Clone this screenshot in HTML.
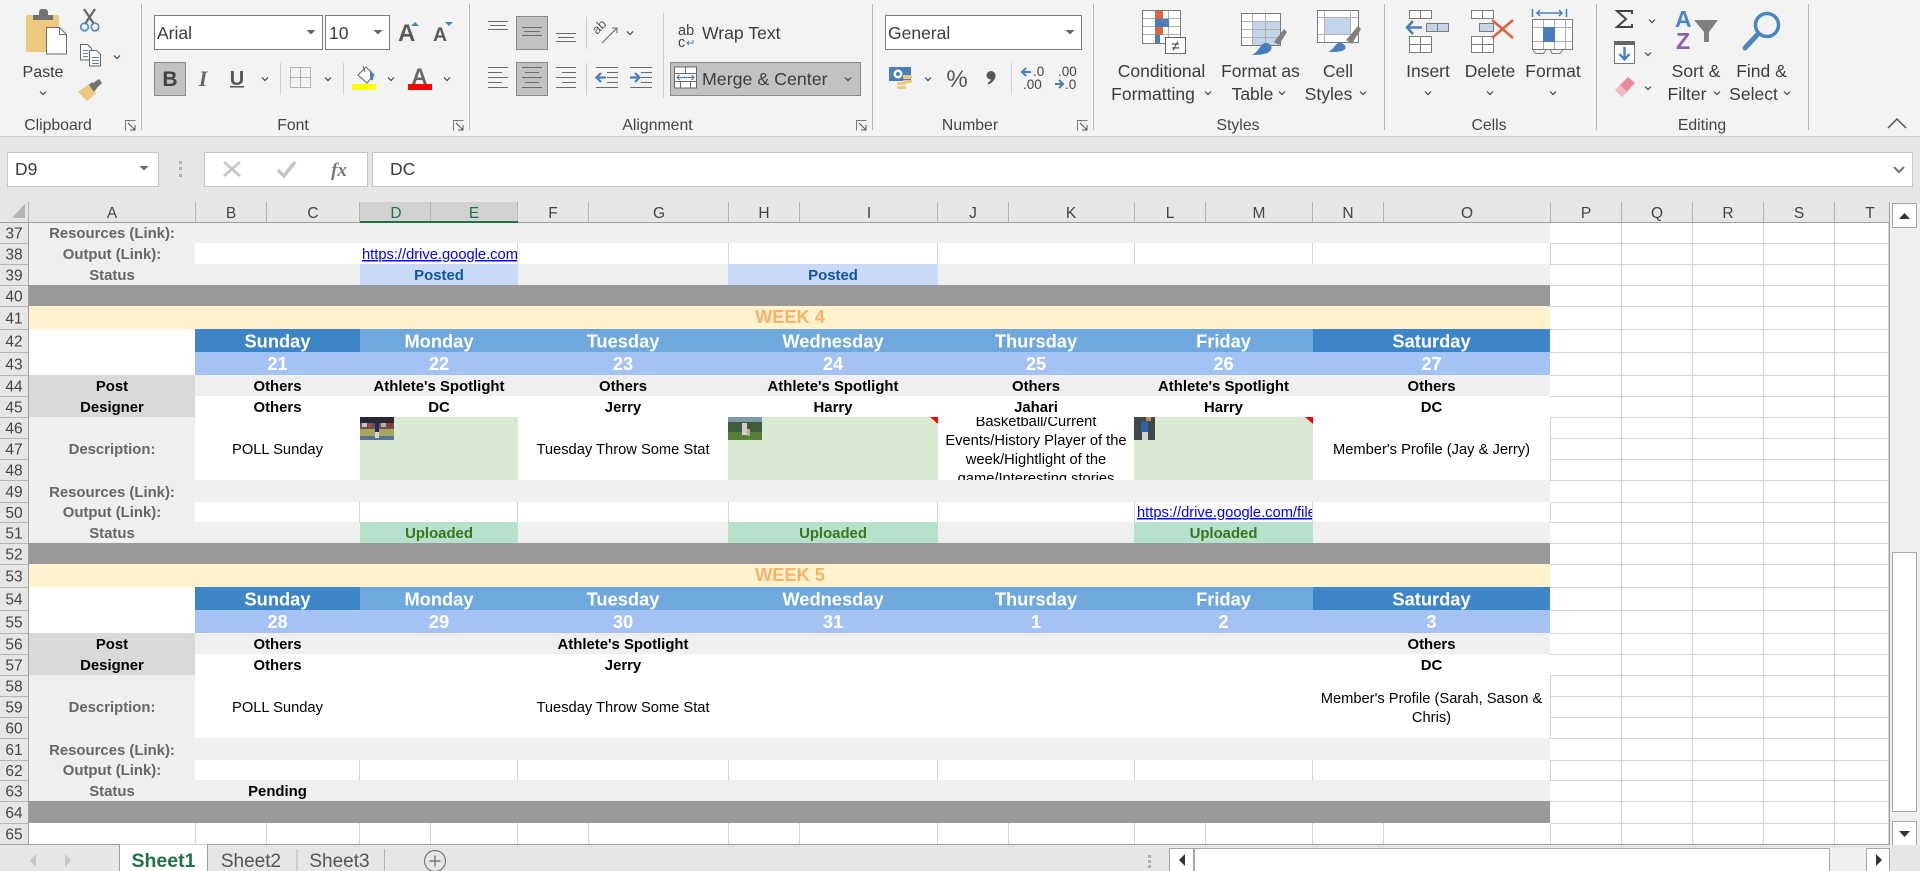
<!DOCTYPE html>
<html lang="en">
<head>
<meta charset="utf-8">
<title>Sheet1 - Excel</title>
<style>
html,body{margin:0;padding:0;width:1920px;height:871px;overflow:hidden;background:#f3f3f3}
svg{display:block;font-family:"Liberation Sans",Arial,sans-serif}
.rn text{font-size:15.5px;fill:#444;text-anchor:middle}
.ch text{font-size:15.5px;fill:#444;text-anchor:middle}
.lab text{font-size:14.9px;font-weight:bold;fill:#666;text-anchor:middle}
.bd text{font-size:14.9px;font-weight:bold;fill:#000;text-anchor:middle}
.nm text{font-size:14.7px;fill:#000;text-anchor:middle}
.day text{font-size:18.3px;font-weight:bold;fill:#fff;text-anchor:middle}
.wk text{font-size:18.2px;font-weight:bold;fill:#f6b26b;text-anchor:middle}
.up text{font-size:14.9px;font-weight:bold;fill:#38761d;text-anchor:middle}
.po text{font-size:14.9px;font-weight:bold;fill:#1155a0;text-anchor:middle}
.lk{font-size:14.7px;fill:#0000ff;text-decoration:underline}
.rb text{font-size:17.5px;fill:#3c3c3c}
.rbm text{font-size:17.5px;fill:#3c3c3c;text-anchor:middle}
.grp text{font-size:15.8px;fill:#444;text-anchor:middle}
.ln{fill:none;stroke:#6a6a6a;stroke-width:1}
.tb{fill:#fff;stroke:#7b7b7b;stroke-width:1}
.cv{fill:none;stroke:#444;stroke-width:1.2}
</style>
</head>
<body>
<svg width="1920" height="871" viewBox="0 0 1920 871" xmlns="http://www.w3.org/2000/svg">
<defs>
<path id="c" class="cv" d="M-3-1.5L0 1.5L3-1.5"/>
<path id="t" fill="#666" d="M-4.5-2H4.5L0 2.5Z"/>
<g id="dl"><path fill="none" stroke="#777" stroke-width="1" d="M10.500 .5H.5V10.500"/><path fill="none" stroke="#555" stroke-width="1" d="M3 3L10 10M10 5V10H5"/></g>
<clipPath id="k1"><rect x="360" y="243" width="157" height="21"/></clipPath>
<clipPath id="k2"><rect x="1135" y="502" width="177" height="20"/></clipPath>
<clipPath id="k3"><rect x="938" y="417" width="196" height="63"/></clipPath>
</defs>

<!-- ribbon -->
<rect width="1920" height="136" fill="#f3f3f3"/>
<rect y="136" width="1920" height="66" fill="#e6e6e6"/>
<rect y="136" width="1920" height="1" fill="#cfcfcf"/>
<g fill="#b6b6b6" shape-rendering="crispEdges">
<rect x="141" y="4" width="1" height="126"/><rect x="469" y="4" width="1" height="126"/><rect x="872" y="4" width="1" height="126"/><rect x="1093" y="4" width="1" height="126"/><rect x="1384" y="4" width="1" height="126"/><rect x="1596" y="4" width="1" height="126"/><rect x="1808" y="4" width="1" height="126"/>
</g>
<g fill="#d0d0d0" shape-rendering="crispEdges">
<rect x="280" y="63" width="1" height="32"/><rect x="343" y="63" width="1" height="32"/><rect x="586" y="17" width="1" height="32"/><rect x="586" y="63" width="1" height="32"/><rect x="663" y="13" width="1" height="85"/><rect x="1011" y="63" width="1" height="32"/>
</g>

<!-- clipboard -->
<rect x="26" y="15" width="33" height="37" rx="2" fill="#edc87e"/>
<path fill="#737373" d="M33 15h6v-3a3 3 0 0 1 3-3h3a3 3 0 0 1 3 3v3h5v5H33z"/>
<path fill="#fff" stroke="#6d6d6d" d="M46.500 27.500h13l7 7v19.500h-20z"/><path fill="none" stroke="#6d6d6d" d="M59.500 27.500v7h7"/>
<path fill="none" stroke="#666" stroke-width="2.200" d="M85 24L95 9M94 24L84 9"/>
<circle cx="84.500" cy="27" r="3.800" fill="none" stroke="#4a86c0" stroke-width="1.600"/><circle cx="95" cy="27" r="3.800" fill="none" stroke="#4a86c0" stroke-width="1.600"/>
<path fill="#fff" stroke="#666" d="M80.500 44.500h7l4 4v11.500h-11z"/><path fill="#fff" stroke="#666" d="M89.500 50.500h7l4 4v11.500h-11z"/>
<path stroke="#4a86c0" fill="none" d="M83 50.500h5M83 53.500h5M83 56.500h5M92 57.500h7M92 60.500h7M92 63.500h7"/>
<path fill="#edc87e" d="M78 92L89 84L96 93L87 101Z"/><path fill="#737373" d="M89 85L92 82L97 88L94 92ZM93 83L99 79L102 83L97 88Z"/>
<g class="rbm"><text x="43" y="77" style="font-size:16px">Paste</text></g>
<use href="#c" x="43" y="93"/><use href="#c" x="117" y="57"/>
<g class="grp"><text x="58" y="130">Clipboard</text><text x="293" y="130">Font</text><text x="657.500" y="130">Alignment</text><text x="970" y="130">Number</text><text x="1238" y="130">Styles</text><text x="1489" y="130">Cells</text><text x="1702" y="130">Editing</text></g>
<use href="#dl" x="125" y="120"/><use href="#dl" x="453" y="120"/><use href="#dl" x="856" y="120"/><use href="#dl" x="1077" y="120"/>

<!-- font -->
<rect x="154.500" y="15.500" width="168" height="34" class="tb" stroke="#8e8e8e"/>
<rect x="325.500" y="15.500" width="64" height="34" class="tb"/>
<g class="rb"><text x="157" y="39">Arial</text><text x="329" y="39">10</text></g>
<use href="#t" x="311" y="32"/><use href="#t" x="378" y="32"/>
<text x="398" y="41" font-size="24" font-weight="bold" fill="#5a5a5a">A</text><path d="M411 26l4-4 4 4z" fill="#4a7ebb"/>
<text x="433" y="41" font-size="19.500" font-weight="bold" fill="#5a5a5a">A</text><path d="M445 22h8l-4 4z" fill="#4a7ebb"/>
<rect x="154.500" y="62.500" width="31" height="33" fill="#c2c2c2" stroke="#8a8a8a"/>
<text x="170" y="86" font-size="21" font-weight="bold" fill="#444" text-anchor="middle">B</text>
<text x="203" y="86" font-size="22" font-family="Liberation Serif" font-style="italic" font-weight="bold" fill="#666" text-anchor="middle">I</text>
<text x="237" y="85" font-size="20" fill="#555" text-anchor="middle" font-weight="bold">U</text><rect x="230" y="86" width="14" height="1.500" fill="#555"/>
<use href="#c" x="265" y="79"/>
<g fill="none" stroke="#777" stroke-dasharray="1 1"><rect x="290.500" y="67.500" width="20" height="20"/><path d="M300.500 67.500v20M290.500 77.500h20"/></g>
<use href="#c" x="328" y="79"/>
<path d="M358 75l8-8 8 8-7 8z" fill="#fff" stroke="#666"/><path d="M363 66l2 6" stroke="#666" fill="none"/><path d="M370 70c3 2 4 5 3 10-2 1-3-1-3-3z" fill="#4a7ebb"/>
<rect x="352" y="84" width="24" height="6" fill="#ff0"/><use href="#c" x="391" y="79"/>
<text x="419.500" y="84" font-size="22" font-weight="bold" fill="#666" text-anchor="middle">A</text>
<rect x="408" y="84" width="24" height="6" fill="#f00"/><use href="#c" x="447" y="79"/>

<!-- alignment -->
<rect x="516.500" y="16.500" width="31" height="33" fill="#c2c2c2" stroke="#8a8a8a"/>
<rect x="516.500" y="62.500" width="31" height="33" fill="#c2c2c2" stroke="#8a8a8a"/>
<path class="ln" d="M488 21.500h20M490 25.500h16M488 29.500h20M522 27.500h20M524 31.500h16M522 35.500h20M556 33.500h20M558 37.500h16M556 41.500h20"/>
<path class="ln" d="M488 67.500h20M488 72.500h14M488 77.500h20M488 82.500h14M488 87.500h20M522 67.500h20M525 72.500h14M522 77.500h20M525 82.500h14M522 87.500h20M556 67.500h20M562 72.500h14M556 77.500h20M562 82.500h14M556 87.500h20"/>
<text transform="translate(597 35) rotate(-45)" font-size="13" fill="#555">ab</text><path fill="none" stroke="#666" d="M602 43L617 28M612 28h5v5"/>
<use href="#c" x="630" y="33"/>
<path class="ln" d="M596 67.500h22M607 72.500h11M607 77.500h11M607 82.500h11M596 87.500h22M630 67.500h22M641 72.500h11M641 77.500h11M641 82.500h11M630 87.500h22"/>
<path fill="none" stroke="#4a7ebb" stroke-width="2.200" d="M606 77.500h-9M601 73l-4.500 4.500L601 82M630 77.500h9M635 73l4.500 4.500L635 82"/>
<g fill="#444"><text x="678" y="35" font-size="14.500">ab</text><text x="678" y="47" font-size="14.500">c</text></g>
<path fill="none" stroke="#4a7ebb" d="M693 40v3h-6M689 41l-2 2 2 2"/>
<g class="rb"><text x="702" y="39" style="font-size:17.6px">Wrap Text</text></g>
<rect x="670.500" y="62.500" width="190" height="33" fill="#c2c2c2" stroke="#8a8a8a"/>
<rect x="674.500" y="67" width="22" height="21" fill="#fff" stroke="#666"/><path class="ln" d="M674 73.500h23M674 81.500h23M685.500 67v6M680.500 81v7M690.500 81v7"/>
<path fill="none" stroke="#4a7ebb" stroke-width="1.200" d="M677 77.500h17M679.500 75l-2.500 2.500 2.500 2.500M691.500 75l2.500 2.500-2.500 2.500"/>
<g class="rb"><text x="702" y="85" style="font-size:17.8px">Merge &amp; Center</text></g>
<use href="#c" x="848" y="79"/>

<!-- number -->
<rect x="885.500" y="15.500" width="196" height="34" class="tb" stroke="#8e8e8e"/>
<g class="rb"><text x="888" y="39">General</text></g>
<use href="#t" x="1070" y="32"/>
<rect x="889" y="67" width="22" height="14" fill="#4a7ebb"/><ellipse cx="898" cy="74" rx="4.500" ry="4.500" fill="#fff"/><circle cx="898" cy="74" r="2" fill="#4a7ebb"/>
<g fill="#edc87e"><rect x="903" y="75" width="9" height="4" rx="1"/><rect x="903" y="80" width="9" height="3" rx="1"/><rect x="897" y="82" width="9" height="3" rx="1"/><rect x="897" y="86" width="9" height="3" rx="1"/></g>
<use href="#c" x="928" y="79"/>
<text x="957" y="87" font-size="24" fill="#555" text-anchor="middle">%</text>
<path fill="#555" d="M986.500 75.500a4.500 4.500 0 1 1 9 0c0 4-3 7-7 9l-1-1.500c2-1 3-2.500 3.500-3.500a4.500 4.500 0 0 1-4.500-4z"/>
<g font-size="13.500" fill="#444"><text x="1033" y="76">.0</text><text x="1023" y="89">.00</text><text x="1058" y="76">.00</text><text x="1065" y="89">.0</text></g>
<path fill="none" stroke="#4a7ebb" stroke-width="2" d="M1031 72h-9M1026 68l-4 4 4 4M1055 84h8M1059 80l4 4-4 4"/>

<!-- styles -->
<rect x="1142.500" y="10.500" width="38" height="33" class="tb"/>
<path stroke="#b0b0b0" fill="none" d="M1155.500 11v32M1168.500 11v32M1143 18.500h37M1143 26.500h37M1143 34.500h37"/>
<rect x="1155" y="11" width="8" height="8" fill="#d86644"/><rect x="1155" y="19" width="14" height="8" fill="#4a7ebb"/><rect x="1155" y="27" width="8" height="8" fill="#d86644"/><rect x="1155" y="35" width="5" height="8" fill="#4a7ebb"/>
<rect x="1165.500" y="37.500" width="20" height="16" fill="#fff" stroke="#666"/><text x="1175.500" y="51" font-size="15" fill="#444" text-anchor="middle">≠</text>
<g class="rbm"><text x="1161.500" y="77">Conditional</text><text x="1153" y="100">Formatting</text><text x="1260.500" y="77">Format as</text><text x="1252.500" y="100">Table</text><text x="1338" y="77">Cell</text><text x="1328.500" y="100">Styles</text><text x="1428" y="77">Insert</text><text x="1490" y="77">Delete</text><text x="1553" y="77">Format</text><text x="1696" y="77">Sort &amp;</text><text x="1687" y="100">Filter</text><text x="1761.500" y="77">Find &amp;</text><text x="1753.500" y="100">Select</text></g>
<use href="#c" x="1208" y="93"/><use href="#c" x="1282" y="93"/><use href="#c" x="1363" y="93"/><use href="#c" x="1428" y="93"/><use href="#c" x="1490" y="93"/><use href="#c" x="1553" y="93"/><use href="#c" x="1717" y="93"/><use href="#c" x="1787" y="93"/>

<rect x="1241.500" y="13.500" width="39" height="32" class="tb"/>
<rect x="1253" y="21" width="27" height="24" fill="#c2d5ea"/>
<path stroke="#b0b0b0" fill="none" d="M1252.500 14v31M1265.500 14v31M1242 21.500h38M1242 29.500h38M1242 37.500h38"/>
<path fill="#808080" d="M1274 42l10-13 3 3-8 13z"/><path fill="#4a7ebb" d="M1252 55c5-2 7-8 12-12 5-1 9 3 7 7-3 4-9 5-19 5z"/>

<rect x="1317.500" y="10.500" width="41" height="32" class="tb"/><rect x="1324" y="17" width="26" height="18" fill="#c2d5ea"/>
<path stroke="#b0b0b0" fill="none" d="M1324.500 11v31M1350.500 11v31M1318 17.500h40M1318 34.500h40"/>
<path fill="#808080" d="M1346 40l12-14 3 3-9 15z"/><path fill="#4a7ebb" d="M1328 52c5-2 6-6 10-9 5-1 9 3 7 6-3 3-8 3-17 3z"/>

<!-- cells -->
<g class="tb"><rect x="1409.500" y="10.500" width="22" height="8"/><rect x="1409.500" y="36.500" width="22" height="16"/><rect x="1471.500" y="10.500" width="22" height="8"/><rect x="1471.500" y="36.500" width="22" height="16"/></g>
<path stroke="#7b7b7b" fill="none" d="M1420.500 10v8M1420.500 36v17M1409 44.500h23M1482.500 10v8M1482.500 36v17M1471 44.500h23"/>
<rect x="1426.500" y="23.500" width="22" height="8" fill="#c2d5ea" stroke="#7b7b7b"/><path d="M1437.500 23v9" stroke="#7b7b7b"/>
<path fill="none" stroke="#4a7ebb" stroke-width="2.500" d="M1422 27.500h-14M1413 21l-6 6.500 6 6.500"/>
<rect x="1479.500" y="23.500" width="14" height="8" fill="#c2d5ea" stroke="#7b7b7b"/>
<path fill="none" stroke="#e0603c" stroke-width="2.500" d="M1492 20L1513 38M1513 20L1492 38"/>
<path fill="none" stroke="#4a7ebb" stroke-width="1.500" d="M1537 13h25M1540 10l-3 3 3 3M1559 10l3 3-3 3M1532.500 9v8M1566.500 9v8"/>
<rect x="1532.500" y="19.500" width="40" height="30" class="tb"/><path stroke="#b0b0b0" fill="none" d="M1543.500 20v29M1554.500 20v29M1565.500 20v29M1533 27.500h39M1533 41.500h39"/>
<rect x="1543" y="27" width="12" height="15" fill="#4a7ebb"/>
<path fill="none" stroke="#7b7b7b" d="M1532.500 49.500l3 4h8l3-4M1550 49.500l2 4h8l3-4"/>

<!-- editing -->
<path fill="none" stroke="#444" stroke-width="2" d="M1632 14V11H1617L1626 19L1617 27H1632V24"/>
<use href="#c" x="1652" y="21"/>
<rect x="1614.500" y="41.500" width="20" height="22" fill="#fff" stroke="#777"/><rect x="1614" y="41" width="21" height="4" fill="#666"/>
<path fill="none" stroke="#4a7ebb" stroke-width="2.400" d="M1624.500 47v12M1619.500 54l5 5.500 5-5.500"/>
<use href="#c" x="1648" y="54"/>
<path fill="#e88a9a" d="M1615 90l13-13 7 6-13 14z"/><path fill="#fff" opacity=".4" d="M1615 90l5-5 7 6-5 6z"/>
<use href="#c" x="1648" y="88"/>
<text x="1675" y="27" font-size="23" font-weight="bold" fill="#4a86c0">A</text><text x="1676" y="49" font-size="23" font-weight="bold" fill="#8a5fb0">Z</text>
<path fill="#808080" d="M1694 20h24l-9 12v10h-5V32z"/>
<circle cx="1767" cy="25" r="11.500" fill="none" stroke="#4a86c0" stroke-width="3.500"/>
<path stroke="#4a86c0" stroke-width="5" stroke-linecap="round" d="M1758 34L1745 48"/>
<path fill="none" stroke="#555" stroke-width="1.500" d="M1888 128L1897 119L1906 128"/>

<!-- formula bar -->
<rect x="7.500" y="152.500" width="151" height="34" fill="#fff" stroke="#c6c6c6"/>
<rect x="204.500" y="152.500" width="163" height="34" fill="#fff" stroke="#c6c6c6"/>
<rect x="372.500" y="152.500" width="1540" height="34" fill="#fff" stroke="#c6c6c6"/>
<g class="rb"><text x="15" y="175">D9</text><text x="390" y="175">DC</text></g>
<use href="#t" x="144" y="168"/>
<g fill="#b0b0b0"><rect x="179" y="161" width="3" height="3"/><rect x="179" y="167" width="3" height="3"/><rect x="179" y="174" width="3" height="3"/></g>
<path fill="none" stroke="#c4c4c4" stroke-width="2.500" d="M224 162L240 176M240 162L224 176"/>
<path fill="none" stroke="#c4c4c4" stroke-width="3.500" d="M278 170l6 6 11-14"/>
<text x="339" y="176" font-size="19" font-style="italic" font-weight="bold" font-family="Liberation Serif" fill="#777" text-anchor="middle">fx</text>
<path fill="none" stroke="#777" stroke-width="2.200" d="M1894 167l5 5 5-5"/>

<!-- sheet area -->
<rect y="202" width="1889" height="20" fill="#e6e6e6"/>
<rect y="222" width="29" height="622" fill="#e6e6e6"/>
<rect x="29" y="223" width="1860" height="621" fill="#fff"/>
<path fill="#b4b4b4" d="M12 218L25 204V218Z"/>
<rect x="360" y="202" width="158" height="20" fill="#d2d2d2"/>

<g shape-rendering="crispEdges">
<rect x="29" y="223" width="1521" height="20" fill="#efefef"/>
<rect x="29" y="243" width="166" height="21" fill="#efefef"/>
<rect x="29" y="264" width="1521" height="21" fill="#efefef"/>
<rect x="360" y="264" width="158" height="21" fill="#c9daf8"/><rect x="728" y="264" width="210" height="21" fill="#c9daf8"/>
<rect x="29" y="285" width="1521" height="21" fill="#999"/>
<rect x="29" y="306" width="1521" height="23" fill="#fff2cc"/>
<rect x="195" y="329" width="165" height="23" fill="#3d85c6"/><rect x="360" y="329" width="953" height="23" fill="#6fa8dc"/><rect x="1313" y="329" width="237" height="23" fill="#3d85c6"/>
<rect x="195" y="352" width="1355" height="23" fill="#a4c2f4"/>
<rect x="29" y="375" width="166" height="42" fill="#d9d9d9"/><rect x="195" y="375" width="1355" height="21" fill="#efefef"/>
<rect x="29" y="417" width="166" height="63" fill="#efefef"/>
<rect x="360" y="417" width="158" height="63" fill="#d9ead3"/><rect x="728" y="417" width="210" height="63" fill="#d9ead3"/><rect x="1134" y="417" width="179" height="63" fill="#d9ead3"/>
<rect x="29" y="480" width="1521" height="22" fill="#efefef"/>
<rect x="29" y="502" width="166" height="20" fill="#efefef"/>
<rect x="29" y="522" width="1521" height="21" fill="#efefef"/>
<rect x="360" y="522" width="158" height="21" fill="#b7e1cd"/><rect x="728" y="522" width="210" height="21" fill="#b7e1cd"/><rect x="1134" y="522" width="179" height="21" fill="#b7e1cd"/>
<rect x="29" y="543" width="1521" height="21" fill="#999"/>
<rect x="29" y="564" width="1521" height="23" fill="#fff2cc"/>
<rect x="195" y="587" width="165" height="23" fill="#3d85c6"/><rect x="360" y="587" width="953" height="23" fill="#6fa8dc"/><rect x="1313" y="587" width="237" height="23" fill="#3d85c6"/>
<rect x="195" y="610" width="1355" height="23" fill="#a4c2f4"/>
<rect x="29" y="633" width="166" height="42" fill="#d9d9d9"/><rect x="195" y="633" width="1355" height="21" fill="#efefef"/>
<rect x="29" y="675" width="166" height="63" fill="#efefef"/>
<rect x="29" y="738" width="1521" height="22" fill="#efefef"/>
<rect x="29" y="760" width="166" height="20" fill="#efefef"/>
<rect x="29" y="780" width="1521" height="21" fill="#efefef"/>
<rect x="29" y="801" width="1521" height="22" fill="#999"/>
</g>

<!-- gridlines -->
<path fill="none" stroke="#d4d4d4" shape-rendering="crispEdges" d="
M1550 243.500H1889M1550 264.500H1889M1550 285.500H1889M1550 306.500H1889M1550 329.500H1889M1550 352.500H1889M1550 375.500H1889M1550 396.500H1889M1550 417.500H1889M1550 438.500H1889M1550 459.500H1889M1550 480.500H1889M1550 502.500H1889M1550 522.500H1889M1550 543.500H1889M1550 564.500H1889M1550 587.500H1889M1550 610.500H1889M1550 633.500H1889M1550 654.500H1889M1550 675.500H1889M1550 696.500H1889M1550 717.500H1889M1550 738.500H1889M1550 760.500H1889M1550 780.500H1889M1550 801.500H1889M1550 823.500H1889M29 844.500H1889
M1550.500 417V480M1550.500 675V738M1550.500 760V780M1550.500 823V844M1550.500 243V264M1550.500 502V522
M1621.500 223V844M1692.500 223V844M1763.500 223V844M1834.500 223V844M1888.500 223V844
M728.500 243V264M937.500 243V264M1134.500 243V264M1312.500 243V264M517.500 243V264
M359.500 502V522M517.500 502V522M728.500 502V522M937.500 502V522M1134.500 502V522M1312.500 502V522
M359.500 760V780M517.500 760V780M728.500 760V780M937.500 760V780M1134.500 760V780M1312.500 760V780
M195.500 823V844M266.500 823V844M359.500 823V844M430.500 823V844M517.500 823V844M588.500 823V844M728.500 823V844M799.500 823V844M937.500 823V844M1008.500 823V844M1134.500 823V844M1205.500 823V844M1312.500 823V844M1383.500 823V844
"/>

<!-- header separators -->
<path fill="none" stroke="#b4b4b4" shape-rendering="crispEdges" d="
M28.500 202V222M195.500 202V222M266.500 202V222M359.500 202V222M430.500 202V222M517.500 202V222M588.500 202V222M728.500 202V222M799.500 202V222M937.500 202V222M1008.500 202V222M1134.500 202V222M1205.500 202V222M1312.500 202V222M1383.500 202V222M1550.500 202V222M1621.500 202V222M1692.500 202V222M1763.500 202V222M1834.500 202V222
M0 243.500H28M0 264.500H28M0 285.500H28M0 306.500H28M0 329.500H28M0 352.500H28M0 375.500H28M0 396.500H28M0 417.500H28M0 438.500H28M0 459.500H28M0 480.500H28M0 502.500H28M0 522.500H28M0 543.500H28M0 564.500H28M0 587.500H28M0 610.500H28M0 633.500H28M0 654.500H28M0 675.500H28M0 696.500H28M0 717.500H28M0 738.500H28M0 760.500H28M0 780.500H28M0 801.500H28M0 823.500H28
"/>
<rect y="222" width="1889" height="1" fill="#9e9e9e"/>
<rect x="28" y="222" width="1" height="622" fill="#9e9e9e"/>
<rect x="360" y="221" width="158" height="2" fill="#217346"/>

<g class="ch">
<text x="112" y="218">A</text><text x="231" y="218">B</text><text x="313" y="218">C</text><text x="396" y="218" style="fill:#217346">D</text><text x="474" y="218" style="fill:#217346">E</text><text x="553" y="218">F</text><text x="659" y="218">G</text><text x="764" y="218">H</text><text x="869" y="218">I</text><text x="973" y="218">J</text><text x="1071" y="218">K</text><text x="1170" y="218">L</text><text x="1259" y="218">M</text><text x="1348" y="218">N</text><text x="1467" y="218">O</text><text x="1586" y="218">P</text><text x="1657" y="218">Q</text><text x="1728" y="218">R</text><text x="1799" y="218">S</text><text x="1870" y="218">T</text>
</g>
<g class="rn">
<text x="14" y="238.500">37</text><text x="14" y="259.500">38</text><text x="14" y="280.500">39</text><text x="14" y="301.500">40</text><text x="14" y="323.500">41</text><text x="14" y="346.500">42</text><text x="14" y="369.500">43</text><text x="14" y="391.500">44</text><text x="14" y="412.500">45</text><text x="14" y="433.500">46</text><text x="14" y="454.500">47</text><text x="14" y="475.500">48</text><text x="14" y="497">49</text><text x="14" y="518">50</text><text x="14" y="538.500">51</text><text x="14" y="559.500">52</text><text x="14" y="581.500">53</text><text x="14" y="604.500">54</text><text x="14" y="627.500">55</text><text x="14" y="649.500">56</text><text x="14" y="670.500">57</text><text x="14" y="691.500">58</text><text x="14" y="712.500">59</text><text x="14" y="733.500">60</text><text x="14" y="755">61</text><text x="14" y="776">62</text><text x="14" y="796.500">63</text><text x="14" y="818">64</text><text x="14" y="839.500">65</text>
</g>

<g class="lab">
<text x="112" y="238">Resources (Link):</text><text x="112" y="259">Output (Link):</text><text x="112" y="280">Status</text>
<text x="112" y="454">Description:</text><text x="112" y="497">Resources (Link):</text><text x="112" y="517">Output (Link):</text><text x="112" y="538">Status</text>
<text x="112" y="712">Description:</text><text x="112" y="755">Resources (Link):</text><text x="112" y="775">Output (Link):</text><text x="112" y="796">Status</text>
</g>
<g class="po"><text x="439" y="280">Posted</text><text x="833" y="280">Posted</text></g>
<text x="362" y="259" class="lk" clip-path="url(#k1)">https://drive.google.com</text>
<g class="wk"><text x="790" y="323">WEEK 4</text><text x="790" y="581">WEEK 5</text></g>
<g class="day">
<text x="277.500" y="347.500">Sunday</text><text x="439" y="347.500">Monday</text><text x="623" y="347.500">Tuesday</text><text x="833" y="347.500">Wednesday</text><text x="1036" y="347.500">Thursday</text><text x="1223.500" y="347.500">Friday</text><text x="1431.500" y="347.500">Saturday</text>
<text x="277.500" y="370">21</text><text x="439" y="370">22</text><text x="623" y="370">23</text><text x="833" y="370">24</text><text x="1036" y="370">25</text><text x="1223.500" y="370">26</text><text x="1431.500" y="370">27</text>
<text x="277.500" y="605.500">Sunday</text><text x="439" y="605.500">Monday</text><text x="623" y="605.500">Tuesday</text><text x="833" y="605.500">Wednesday</text><text x="1036" y="605.500">Thursday</text><text x="1223.500" y="605.500">Friday</text><text x="1431.500" y="605.500">Saturday</text>
<text x="277.500" y="628">28</text><text x="439" y="628">29</text><text x="623" y="628">30</text><text x="833" y="628">31</text><text x="1036" y="628">1</text><text x="1223.500" y="628">2</text><text x="1431.500" y="628">3</text>
</g>
<g class="bd">
<text x="112" y="391">Post</text><text x="112" y="412">Designer</text>
<text x="277.500" y="391">Others</text><text x="439" y="391">Athlete's Spotlight</text><text x="623" y="391">Others</text><text x="833" y="391">Athlete's Spotlight</text><text x="1036" y="391">Others</text><text x="1223.500" y="391">Athlete's Spotlight</text><text x="1431.500" y="391">Others</text>
<text x="277.500" y="412">Others</text><text x="439" y="412">DC</text><text x="623" y="412">Jerry</text><text x="833" y="412">Harry</text><text x="1036" y="412">Jahari</text><text x="1223.500" y="412">Harry</text><text x="1431.500" y="412">DC</text>
<text x="112" y="649">Post</text><text x="112" y="670">Designer</text>
<text x="277.500" y="649">Others</text><text x="623" y="649">Athlete's Spotlight</text><text x="1431.500" y="649">Others</text>
<text x="277.500" y="670">Others</text><text x="623" y="670">Jerry</text><text x="1431.500" y="670">DC</text>
<text x="277.500" y="796">Pending</text>
</g>
<g class="nm">
<text x="277.500" y="454">POLL Sunday</text><text x="623" y="454">Tuesday Throw Some Stat</text><text x="1431.500" y="454">Member's Profile (Jay &amp; Jerry)</text>
<g clip-path="url(#k3)"><text x="1036" y="426">Basketball/Current</text><text x="1036" y="445">Events/History Player of the</text><text x="1036" y="464">week/Hightlight of the</text><text x="1036" y="483">game/Interesting stories</text></g>
<text x="277.500" y="712">POLL Sunday</text><text x="623" y="712">Tuesday Throw Some Stat</text><text x="1431.500" y="703">Member's Profile (Sarah, Sason &amp;</text><text x="1431.500" y="722">Chris)</text>
</g>
<text x="1137" y="517" class="lk" clip-path="url(#k2)">https://drive.google.com/file</text>
<g class="up"><text x="439" y="538">Uploaded</text><text x="833" y="538">Uploaded</text><text x="1223.500" y="538">Uploaded</text></g>

<!-- thumbnails -->
<g shape-rendering="crispEdges">
<rect x="360" y="417" width="34" height="6" fill="#2a2730"/><rect x="360" y="423" width="34" height="6" fill="#6e5058"/><rect x="362" y="423" width="5" height="4" fill="#c9c2c2"/><rect x="368" y="424" width="4" height="3" fill="#a84a4a"/><rect x="381" y="423" width="5" height="4" fill="#b8b0b0"/><rect x="387" y="423" width="5" height="4" fill="#8c3a3a"/><rect x="360" y="429" width="34" height="7" fill="#a6a65a"/><rect x="360" y="436" width="34" height="4" fill="#5a7390"/><rect x="375" y="420" width="4" height="12" fill="#1f2d4f"/><rect x="375" y="432" width="4" height="6" fill="#d8d8d8"/>
<rect x="728" y="417" width="34" height="5" fill="#7f9ba8"/><rect x="728" y="422" width="34" height="10" fill="#3f5d3a"/><rect x="728" y="432" width="34" height="8" fill="#55803a"/><rect x="742" y="423" width="5" height="12" fill="#d8ccc8"/><rect x="747" y="429" width="3" height="7" fill="#b8aaa6"/>
<rect x="1134" y="417" width="21" height="23" fill="#3c4a48"/><rect x="1141" y="422" width="7" height="10" fill="#2f63a8"/><rect x="1142" y="432" width="6" height="8" fill="#cfd2d4"/><rect x="1146" y="417" width="5" height="4" fill="#b98a6c"/>
</g>
<path fill="#f00" d="M930 417H938V424Z"/><path fill="#f00" d="M1305 417H1313V424Z"/>

<!-- vertical scrollbar -->
<rect x="1889" y="202" width="31" height="643" fill="#f0f0f0"/><rect x="1889" y="202" width="31" height="1" fill="#e6e6e6"/>
<rect x="1889" y="202" width="1" height="643" fill="#9e9e9e"/>
<rect x="1892.500" y="203.500" width="24" height="24" fill="#fff" stroke="#a6a6a6"/><path d="M1899 219l5.500-6 5.500 6z" fill="#333"/>
<rect x="1892.500" y="552.500" width="24" height="259" fill="#fff" stroke="#a6a6a6"/>
<rect x="1892.500" y="821.500" width="24" height="24" fill="#fff" stroke="#a6a6a6"/><path d="M1899 831l5.500 6 5.500-6z" fill="#333"/>

<!-- sheet tabs -->
<rect y="845" width="1920" height="26" fill="#e6e6e6"/>
<rect y="844" width="1889" height="1" fill="#9e9e9e"/>
<rect x="119.500" y="844.500" width="88" height="28" fill="#fff" stroke="#9e9e9e"/>
<rect x="120" y="844" width="87" height="1" fill="#d4d4d4"/>
<path fill="#c6c6c6" d="M36 854v13l-6-6.500zM65 854v13l6-6.500z"/>
<text x="163.500" y="867" font-size="19.500" font-weight="bold" fill="#217346" text-anchor="middle">Sheet1</text>
<text x="251" y="867" font-size="19" fill="#555" text-anchor="middle">Sheet2</text>
<text x="339.500" y="867" font-size="19" fill="#555" text-anchor="middle">Sheet3</text>
<rect x="296.500" y="849" width="1" height="22" fill="#b4b4b4"/><rect x="384" y="849" width="1" height="22" fill="#b4b4b4"/>
<circle cx="435" cy="861" r="10.500" fill="none" stroke="#777" stroke-width="1.200"/><path stroke="#777" stroke-width="1.400" fill="none" d="M429.500 861h11M435 855.500v11"/>
<g fill="#b0b0b0"><rect x="1148" y="855" width="3" height="3"/><rect x="1148" y="860" width="3" height="3"/><rect x="1148" y="865" width="3" height="3"/></g>
<rect x="1169" y="848" width="721" height="23" fill="#f0f0f0"/>
<rect x="1169.500" y="848.500" width="24" height="23" fill="#fff" stroke="#a6a6a6"/><path d="M1185 854v12l-6-6z" fill="#333"/>
<rect x="1194.500" y="848.500" width="635" height="23" fill="#fff" stroke="#a6a6a6"/>
<rect x="1866.500" y="848.500" width="23" height="23" fill="#fff" stroke="#a6a6a6"/><path d="M1876 854v12l6-6z" fill="#333"/>
</svg>
</body>
</html>
